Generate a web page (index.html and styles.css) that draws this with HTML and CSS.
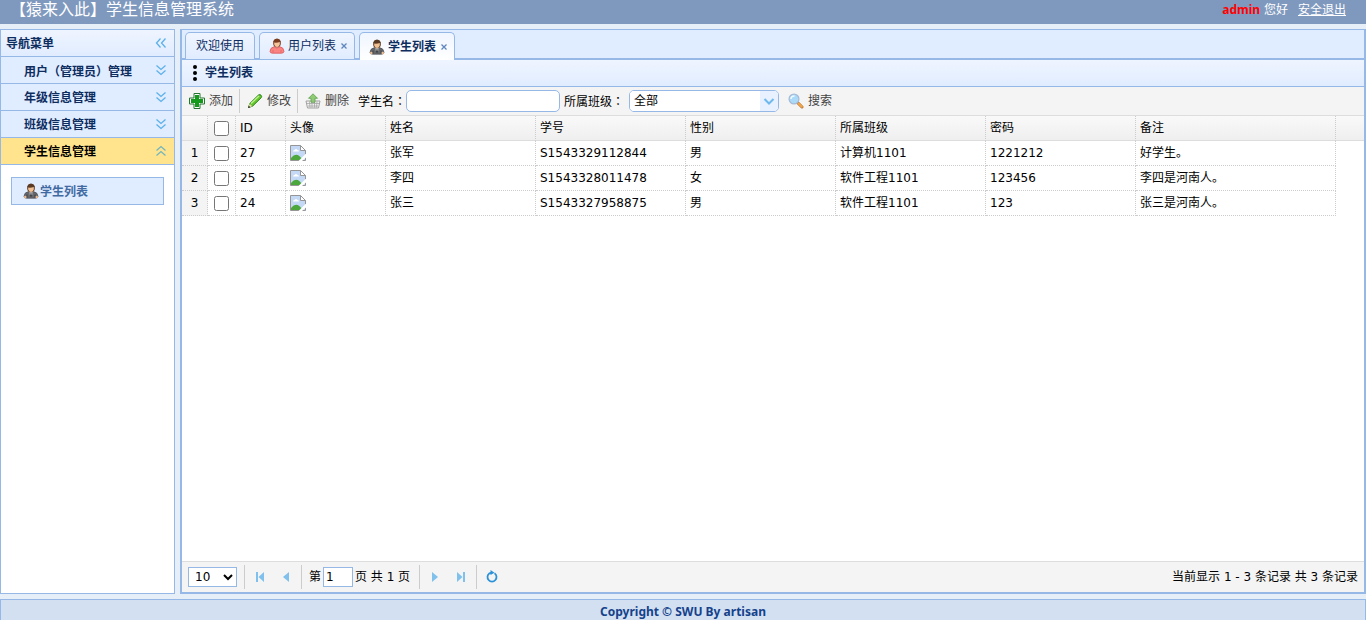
FILE: index.html
```html
<!DOCTYPE html>
<html lang="zh-CN">
<head>
<meta charset="utf-8">
<title>学生信息管理系统</title>
<link rel="stylesheet" href="styles.css">
</head>
<body>
<svg class="defs" aria-hidden="true">
  <symbol id="student" viewBox="0 0 16 16">
    <path d="M4.200 6V3.200Q5 .6 8 .6t3.800 2.600V6q-.6 3.500-3.800 3.500T4.200 6z" fill="#5a3a22"/>
    <path d="M5.200 4.600Q8 5 10.800 4v2.500Q10 9 8 9T5.200 6.500z" fill="#f2c193"/>
    <path d="M1 13.500Q1.200 9.500 5 8.800l3 2 3-2q3.800.7 4 4.700-.3 1.700-2.500 1.700h-9Q1.300 15.200 1 13.500z" fill="#65676b" stroke="#4b4d51" stroke-width=".7"/>
    <path d="M6.500 9.300L8 10.800l1.500-1.500-.3 2.700H6.800z" fill="#ccc"/><path d="M7.500 10.500h1l.3 3H7.200z" fill="#34363a"/>
    <path d="M4 11.500v3M12 11.500v3" stroke="#36383b" stroke-width=".8"/>
    <circle cx="2.300" cy="14" r="1.200" fill="#eebc91"/><circle cx="13.700" cy="14" r="1.200" fill="#eebc91"/>
  </symbol>
  <symbol id="user" viewBox="0 0 16 16">
    <path d="M4.200 6V3.200Q5 .6 8 .6t3.800 2.600V6q-.6 3.500-3.800 3.500T4.200 6z" fill="#7b3c20"/>
    <path d="M5.200 4.600Q8 5 10.800 4v2.500Q10 9 8 9T5.200 6.500z" fill="#f6c49c"/>
    <path d="M1 13.500Q1.200 9.500 5 8.800q3 2.400 6 0 3.800.7 4 4.700-.3 1.700-2.500 1.700h-9Q1.300 15.200 1 13.500z" fill="#f98482" stroke="#d9575a" stroke-width=".8"/>
    <path d="M4 12v2.500M12 12v2.500" stroke="#dd6060" stroke-width=".7"/>
  </symbol>
  <symbol id="down" viewBox="0 0 16 16"><path d="M3.500 3.500L8 7.500l4.500-4M3.500 8.500l4.500 4 4.500-4" fill="none" stroke="currentColor" stroke-width="1.300"/></symbol>
  <symbol id="up" viewBox="0 0 16 16"><path d="M3.500 7.500L8 3.500l4.500 4M3.500 12.500l4.500-4 4.500 4" fill="none" stroke="currentColor" stroke-width="1.300"/></symbol>
  <symbol id="left" viewBox="0 0 16 16"><path d="M7.500 3.500L3.500 8l4 4.500M12.500 3.500l-4 4.500 4 4.500" fill="none" stroke="currentColor" stroke-width="1.300"/></symbol>
  <symbol id="close" viewBox="0 0 8 8"><path d="M1.500 1.500l5 5M6.500 1.500l-5 5" stroke="#5f86bd" stroke-width="1.300"/></symbol>
  <symbol id="broken" viewBox="0 0 16 16">
    <path d="M.5.500h10l5 5v10H.5z" fill="#c3d9f6" stroke="#969696"/>
    <path d="M1 15v-2q5.500-7 11 1v1z" fill="#4ca83c"/>
    <path d="M3 6.500q0-1.600 1.500-1.500 1.500-2 3 0 1.600 0 1.500 1.500z" fill="#fff"/>
    <path d="M10.500.5v5h5z" fill="#fff" stroke="#969696"/>
    <path d="M16.500 8L8.500 16h3.500l4.500-4z" fill="#fff"/>
  </symbol>
</svg>

<header class="top">
  <h1 class="brand">【猿来入此】学生信息管理系统</h1>
  <div class="account"><strong class="name">admin</strong> <span>您好</span><a class="logout" href="#">安全退出</a></div>
</header>

<div class="body">
  <nav class="side">
    <div class="side-title"><span>导航菜单</span><button class="icon-btn" aria-label="收起"><svg class="icon"><use href="#left"/></svg></button></div>
    <button class="group"><span>用户<span class="centered" lang="zh-TW">（</span>管理员<span class="centered" lang="zh-TW">）</span>管理</span><svg class="icon"><use href="#down"/></svg></button>
    <button class="group"><span>年级信息管理</span><svg class="icon"><use href="#down"/></svg></button>
    <button class="group"><span>班级信息管理</span><svg class="icon"><use href="#down"/></svg></button>
    <button class="group open"><span>学生信息管理</span><svg class="icon"><use href="#up"/></svg></button>
    <div class="group-body"><a class="side-link" href="#"><svg class="icon"><use href="#student"/></svg><span>学生列表</span></a></div>
  </nav>

  <main class="main">
    <div class="tabs">
      <button class="tab">欢迎使用</button>
      <button class="tab"><svg class="icon"><use href="#user"/></svg><span>用户列表</span><svg class="close"><use href="#close"/></svg></button>
      <button class="tab active"><svg class="icon"><use href="#student"/></svg><span>学生列表</span><svg class="close"><use href="#close"/></svg></button>
    </div>
    <h2 class="panel-title"><svg class="icon" viewBox="0 0 16 16"><circle cx="8" cy="2" r="2"/><circle cx="8" cy="8" r="2"/><circle cx="8" cy="14" r="2"/></svg>学生列表</h2>
    <div class="toolbar">
      <button class="tool"><svg class="icon" viewBox="0 0 16 16"><path d="M5 .5h6V5h4.500v6H11v4.500H5V11H.5V5H5z" fill="#fff" stroke="#287433" stroke-linejoin="round"/><path d="M6 2h4v4h4v4h-4v4H6v-4H2V6h4z" fill="#159a1d"/></svg>添加</button>
      <span class="sep"></span>
      <button class="tool"><svg class="icon" viewBox="0 0 16 16"><path d="M1.500 14.500l1.300-4L11.500 2q1.300-1 2.500.2t.2 2.500L5.500 13.200z" fill="#65c72d" stroke="#26801b"/><path d="M4 10.500L12 3" stroke="#c1f38d" stroke-width="1.300"/><path d="M1.200 14.800l1.400-4 2.700 2.500z" fill="#e9d9a8"/><path d="M1 15l.8-2.300 1.500 1.500z" fill="#222"/></svg>修改</button>
      <span class="sep"></span>
      <button class="tool"><svg class="icon" viewBox="0 0 16 16"><path d="M1 8h14l-1.500 7h-11z" fill="#f2f2f2" stroke="#a0a0a0"/><path d="M2 10.500h12M3 13h10M4.500 8.500l.5 6M7 8.500v6M9.500 8.500v6M12 8.500l-.5 6" stroke="#a4a4a4" stroke-width=".8"/><path d="M8 .8l4.500 4.500H10v4H6v-4H3.500z" fill="#8fcb72" stroke="#5f9f50" stroke-width=".8"/></svg>删除</button>
      <label class="field-label" for="name">学生名<span class="centered" lang="zh-TW">：</span></label>
      <input class="field" id="name" type="text">
      <label class="field-label class-label" for="class">所属班级<span class="centered" lang="zh-TW">：</span></label>
      <span class="combo"><select class="combo-select" id="class"><option>全部</option></select><svg class="combo-arrow" viewBox="0 0 18 20"><path d="M0 0h18v20H0z" fill="#e8f1ff"/><path d="M4.500 8L9 12.500 13.500 8" fill="none" stroke="#6fb9ee" stroke-width="2"/></svg></span>
      <button class="tool search"><svg class="icon" viewBox="0 0 16 16"><path d="M9.500 9.500l4.500 4.500" stroke="#b56b2c" stroke-width="3" stroke-linecap="round"/><path d="M10.500 10.500l3.300 3.300" stroke="#f2a849" stroke-width="2" stroke-linecap="round"/><circle cx="6" cy="6" r="4.900" fill="#aadaf8" stroke="#a6bbd8" stroke-width="1.300"/><path d="M3 6q0-3 3.500-3" fill="none" stroke="#eefaff" stroke-width="1.500"/></svg>搜索</button>
    </div>

    <div class="grid-wrap">
      <table class="grid">
        <colgroup><col class="c-num"><col class="c-check"><col class="c-id"><col class="c-photo"><col class="c-mid"><col class="c-mid"><col class="c-mid"><col class="c-mid"><col class="c-mid"><col class="c-note"><col></colgroup>
        <thead><tr><th></th><th class="check"><input type="checkbox" aria-label="全选"></th><th>ID</th><th>头像</th><th>姓名</th><th>学号</th><th>性别</th><th>所属班级</th><th>密码</th><th>备注</th><th class="rest"></th></tr></thead>
        <tbody>
          <tr><td class="num">1</td><td class="check"><input type="checkbox" aria-label="选择 27"></td><td>27</td><td><svg class="icon photo"><use href="#broken"/></svg></td><td>张军</td><td>S1543329112844</td><td>男</td><td>计算机1101</td><td>1221212</td><td>好学生。</td><td class="rest"></td></tr>
          <tr><td class="num">2</td><td class="check"><input type="checkbox" aria-label="选择 25"></td><td>25</td><td><svg class="icon photo"><use href="#broken"/></svg></td><td>李四</td><td>S1543328011478</td><td>女</td><td>软件工程1101</td><td>123456</td><td>李四是河南人。</td><td class="rest"></td></tr>
          <tr><td class="num">3</td><td class="check"><input type="checkbox" aria-label="选择 24"></td><td>24</td><td><svg class="icon photo"><use href="#broken"/></svg></td><td>张三</td><td>S1543327958875</td><td>男</td><td>软件工程1101</td><td>123</td><td>张三是河南人。</td><td class="rest"></td></tr>
        </tbody>
      </table>
    </div>

    <div class="pager">
      <select class="page-size" aria-label="每页条数"><option>10</option></select>
      <span class="sep"></span>
      <button class="icon-btn page-btn" aria-label="首页"><svg class="icon" viewBox="0 0 16 16"><path d="M4 3h2v10H4zM12 3v10L6.500 8z"/></svg></button>
      <button class="icon-btn page-btn" aria-label="上一页"><svg class="icon" viewBox="0 0 16 16"><path d="M11 3v10L5 8z"/></svg></button>
      <span class="sep"></span>
      <label class="page-label" for="page">第</label><input class="page-input" id="page" type="text" value="1"><span class="page-total">页 共 1 页</span>
      <span class="sep"></span>
      <button class="icon-btn page-btn" aria-label="下一页"><svg class="icon" viewBox="0 0 16 16"><path d="M5 3v10l6-5z"/></svg></button>
      <button class="icon-btn page-btn" aria-label="末页"><svg class="icon" viewBox="0 0 16 16"><path d="M4 3v10l5.500-5zM10 3h2v10h-2z"/></svg></button>
      <span class="sep"></span>
      <button class="icon-btn page-btn" aria-label="刷新"><svg class="icon" viewBox="0 0 16 16"><path d="M10.500 4.300A4.500 4.500 0 1 1 5.500 4.300L8 3.500" fill="none" stroke="#2b91d8" stroke-width="1.800"/><path d="M6.500 1l4 2.700-4 2.300z" fill="#2b91d8"/></svg></button>
      <span class="summary">当前显示 1 - 3 条记录 共 3 条记录</span>
    </div>
  </main>
</div>

<footer class="foot">Copyright © SWU By artisan</footer>
</body>
</html>
```
FILE: styles.css
```css
* { box-sizing: border-box; }
body {
  margin: 0;
  height: 100vh;
  display: flex;
  flex-direction: column;
  overflow: hidden;
  background: #e6eef8;
  color: #000;
  font: 12px/16px "DejaVu Sans", "Noto Sans CJK SC", sans-serif;
}
button, input, select { font: inherit; color: inherit; margin: 0; }
button { border: 0; padding: 0; background: none; cursor: pointer; }
.defs { display: none; }
.icon { width: 16px; height: 16px; flex: none; display: block; }
.icon-btn { display: block; color: #5cb0ea; }

.top {
  flex: none;
  height: 24px;
  display: flex;
  justify-content: space-between;
  padding: 0 20px 0 10px;
  background: #7f99be;
  color: #fff;
  line-height: 20px;
}
.brand { margin: 0; font-size: 16px; font-weight: 400; line-height: 20px; }
.name { color: #f00; font-family: "Noto Sans", sans-serif; }
.logout { color: #fff; margin-left: 10px; }

.body { flex: 1; min-height: 0; display: flex; gap: 5px; padding: 5px 0; }

.side { width: 175px; flex: none; border: 1px solid #95b8e7; background: #fff; }
.side-title, .group {
  display: flex;
  align-items: center;
  justify-content: space-between;
  width: 100%;
  height: 27px;
  padding: 0 5px;
  border-bottom: 1px solid #95b8e7;
  color: #0e2d5f;
  font-weight: 700;
}
.side-title { background: linear-gradient(#eff5ff, #e0ecff); }
.side-title span, .group span, .side-link span { line-height: 18px; }
.side-title > span, .group > span, .side-link > span { padding-top: 2px; }
.group { padding-left: 23px; background: #e0ecff; }
.group .icon { color: #5cb0ea; }
.group.open { background: #ffe48d; color: #000; }
.group.open .icon { color: #72b5bd; }
.group-body { padding: 12px 10px; }
.side-link {
  display: flex;
  align-items: center;
  gap: 1px;
  height: 28px;
  padding-left: 11px;
  border: 1px solid #95b8e7;
  background: #e0ecff;
  color: #416aa3;
  text-decoration: none;
  font-weight: 700;
}

.main {
  flex: 1;
  min-width: 0;
  display: flex;
  flex-direction: column;
  border: 2px solid #95b8e7;
  border-top-width: 1px;
  background: #fff;
}
.tabs {
  flex: none;
  display: flex;
  gap: 4px;
  height: 30px;
  padding: 2px 3px 0;
  background: #e0ecff;
  border-bottom: 2px solid #95b8e7;
}
.tab {
  display: flex;
  align-items: center;
  gap: 3px;
  height: 27px;
  padding: 0 6px 0 9px;
  border: 1px solid #95b8e7;
  border-bottom: 0;
  border-radius: 5px 5px 0 0;
  background: linear-gradient(#eff5ff, #e0ecff);
  color: #0e2d5f;
}
.tab:first-child { padding: 0 10px; }
.tab.active { height: 28px; background: linear-gradient(#eff5ff, #fff); font-weight: 700; }
.close { width: 8px; height: 8px; flex: none; margin-left: 1px; }
.panel-title {
  flex: none;
  display: flex;
  align-items: center;
  gap: 2px;
  height: 27px;
  margin: 0;
  padding: 0 5px;
  border-bottom: 1px solid #95b8e7;
  background: linear-gradient(#eff5ff, #e0ecff);
  color: #0e2d5f;
  font-size: 12px;
}
.panel-title .icon { fill: #000; }

.toolbar {
  flex: none;
  display: flex;
  align-items: center;
  height: 29px;
  padding: 0 7px;
  background: #f4f4f4;
  border-bottom: 1px solid #ddd;
}
.tool { display: flex; align-items: center; gap: 4px; color: #444; }
.sep { width: 1px; height: 24px; margin: 0 7px 0 6px; background: #ccc; }
.field-label { margin-left: 9px; }
.class-label { margin-left: 4px; }
.centered { font-family: "Noto Sans CJK TC", sans-serif; }
.field {
  width: 154px;
  height: 22px;
  padding: 0 4px;
  border: 1px solid #95b8e7;
  border-radius: 5px;
  background: #fff;
}
.combo {
  display: flex;
  width: 150px;
  height: 22px;
  margin-left: 5px;
  border: 1px solid #95b8e7;
  border-radius: 5px;
  background: #fff;
  overflow: hidden;
}
.combo-select { flex: 1; appearance: none; border: 0; padding: 0 4px; background: #fff; }
.combo-arrow { width: 18px; height: 20px; flex: none; }
.search { margin-left: 9px; }

.grid-wrap { flex: 1; min-height: 0; overflow: hidden; }
.grid { width: 100%; table-layout: fixed; border-collapse: separate; border-spacing: 0; }
.c-num { width: 26px; }
.c-check { width: 28px; }
.c-id { width: 50px; }
.c-photo { width: 100px; }
.c-mid { width: 150px; }
.c-note { width: 200px; }
.grid th, .grid td {
  height: 25px;
  padding: 0 4px;
  border: dotted #ccc;
  border-width: 0 1px 1px 0;
  text-align: left;
  font-weight: 400;
  white-space: nowrap;
}
.grid th { border-bottom: 1px solid #ddd; background: linear-gradient(#f9f9f9, #efefef); }
.grid .num { background: #f4f4f4; padding: 0; text-align: center; }
.grid .check { padding: 0; text-align: center; }
.grid .check input { display: block; width: 15px; height: 15px; margin: 0 auto; }
.grid th.rest { border-right: 0; }
.grid td.rest { border: 0; }

.pager {
  flex: none;
  display: flex;
  align-items: center;
  height: 31px;
  padding: 0 6px;
  border-top: 1px solid #ddd;
  background: #f4f4f4;
}
.page-size { width: 49px; height: 20px; padding: 0 2px; border: 1px solid #95b8e7; background: #fff; }
.pager .sep { margin: 0 7px; }
.page-btn { fill: #7fc0ec; }
.page-btn + .page-btn { margin-left: 10px; }
.page-input { width: 30px; height: 20px; margin: 0 2px; padding: 0 2px; border: 1px solid #95b8e7; background: #fff; }
.page-total { margin-right: 2px; }
.summary { margin-left: auto; }

.foot {
  flex: none;
  height: 21px;
  border: 1px solid #95b8e7;
  border-bottom: 0;
  background: #d2e0f2;
  color: #15428b;
  font: 700 12px/24px "Noto Sans", sans-serif;
  text-align: center;
}
```
